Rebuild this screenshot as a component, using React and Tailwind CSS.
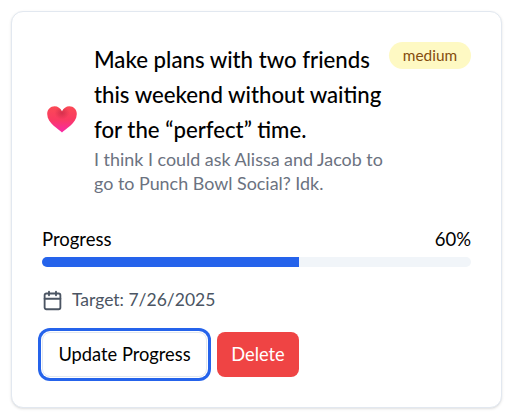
import { Calendar } from 'lucide-react';

function Heart() {
  return (
    <svg width="30" height="27" viewBox="0 0 30 27" className="shrink-0">
      <defs>
        <linearGradient id="heartFill" x1="0" y1="0" x2="0" y2="1">
          <stop offset="0" stopColor="#fb4a55" />
          <stop offset="0.5" stopColor="#fa3a62" />
          <stop offset="1" stopColor="#f828a8" />
        </linearGradient>
        <radialGradient id="heartDip" cx="0.5" cy="0.25" r="0.25">
          <stop offset="0" stopColor="#c92a48" stopOpacity="0.75" />
          <stop offset="1" stopColor="#c92a48" stopOpacity="0" />
        </radialGradient>
      </defs>
      <path d="M15 26.6C12.5 23.4 0.2 17.6 0.2 8C0.2 3.4 3.5 0.3 7.6 0.3C10.8 0.3 13.6 2.2 15 5.6C16.4 2.2 19.2 0.3 22.4 0.3C26.5 0.3 29.8 3.4 29.8 8C29.8 17.6 17.5 23.4 15 26.6Z" fill="url(#heartFill)" />
      <path d="M15 26.6C12.5 23.4 0.2 17.6 0.2 8C0.2 3.4 3.5 0.3 7.6 0.3C10.8 0.3 13.6 2.2 15 5.6C16.4 2.2 19.2 0.3 22.4 0.3C26.5 0.3 29.8 3.4 29.8 8C29.8 17.6 17.5 23.4 15 26.6Z" fill="url(#heartDip)" />
    </svg>
  );
}

export default function App() {
  return (
    <div className="w-[512px] h-[417px] bg-white p-[11px] font-['Lato','Noto_Sans',sans-serif] text-black">
      <div className="w-[491px] h-[397px] bg-white border border-[#e2e8f0] rounded-xl shadow-sm pt-[30px] px-[30px]">
        {/* header */}
        <div className="flex justify-between items-start">
          <div className="flex items-center gap-4">
            <div className="w-[36px] pl-[5px] pt-[2px]"><Heart /></div>
            <div className="w-[295px]">
              <h2 className="text-[22.2px] leading-[35px] font-medium">
                Make plans with two friends this weekend without waiting for the “perfect” time.
              </h2>
              <p className="text-[17.9px] leading-6 text-[#6b7280]">
                I think I could ask Alissa and Jacob to go to Punch Bowl Social? Idk.
              </p>
            </div>
          </div>
          <span className="h-[27px] w-[82px] flex items-center justify-center rounded-full bg-[#fef9c3] text-[#854d0e] text-[15.4px]">
            medium
          </span>
        </div>

        {/* progress */}
        <div className="mt-[32px]">
          <div className="flex justify-between text-[18.5px] leading-6 mb-[6px]">
            <span>Progress</span>
            <span>60%</span>
          </div>
          <div className="h-[10px] rounded-full bg-[#f1f5f9] overflow-hidden">
            <div className="h-full bg-[#2563eb]" style={{ width: '60%' }} />
          </div>
        </div>

        {/* target date */}
        <div className="flex items-center gap-[9px] mt-[21px] text-[17.5px] leading-6 text-[#4b5563]">
          <Calendar size={21} strokeWidth={2.1} />
          <span>Target: 7/26/2025</span>
        </div>

        {/* actions */}
        <div className="flex items-center gap-[10px] mt-[20px]">
          <button className="h-[45px] w-[165px] rounded-lg bg-white border border-[#e2e8f0] ring-[3px] ring-offset-1 ring-[#2563eb] text-[18.3px]">
            Update Progress
          </button>
          <button className="h-[45px] w-[82px] rounded-lg bg-[#ef4444] text-white text-[18.3px]">
            Delete
          </button>
        </div>
      </div>
    </div>
  );
}
